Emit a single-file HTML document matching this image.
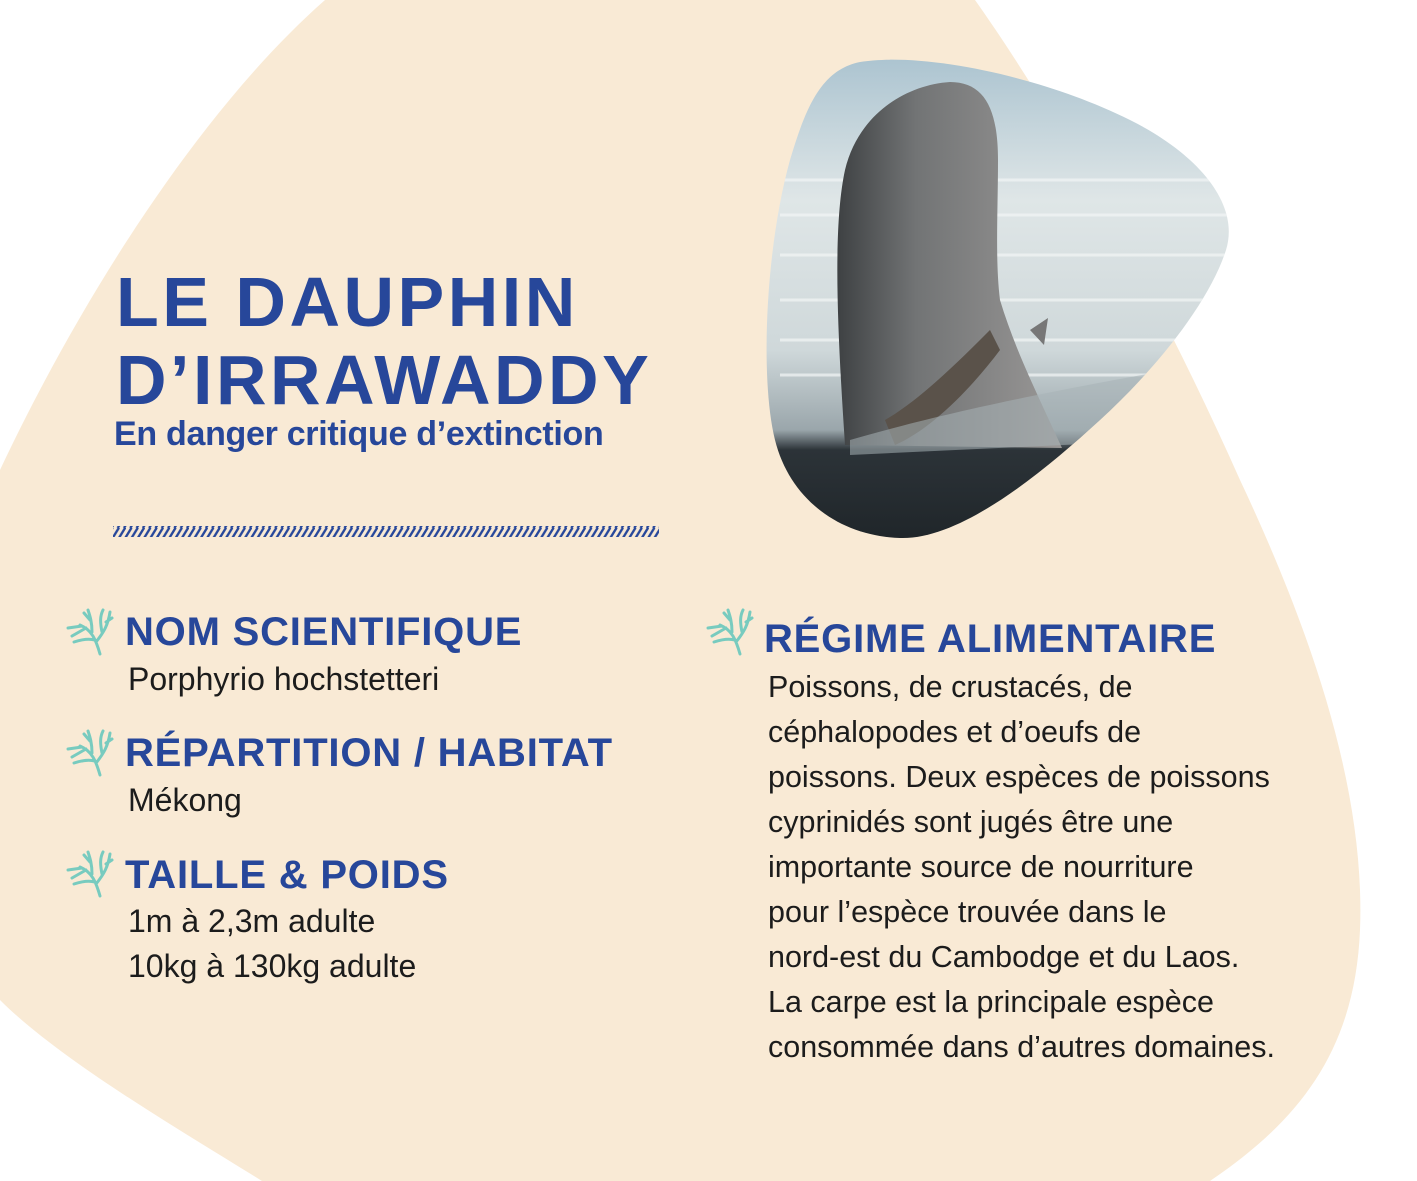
<!DOCTYPE html>
<html><head><meta charset="utf-8"><style>
html,body{margin:0;padding:0}
body{width:1417px;height:1181px;position:relative;overflow:hidden;background:#fff;font-family:"Liberation Sans",sans-serif}
.t{position:absolute;white-space:nowrap}
.h1{color:#27479a;font-weight:bold;font-size:70px;letter-spacing:3.5px;line-height:1}
.sub{color:#27479a;font-weight:bold;font-size:34px;letter-spacing:-0.3px}
.hd{color:#27479a;font-weight:bold;font-size:40px;letter-spacing:0.8px;line-height:1}
.b{color:#1c1c1c;font-size:32px;line-height:1}
.r{color:#1c1c1c;font-size:30.5px;line-height:1}
</style></head><body>
<svg width="1417" height="1181" style="position:absolute;left:0;top:0">
<defs>
<clipPath id="pc"><path d="M860,62 C920,52 1040,75 1130,120 C1200,155 1240,205 1226,250 C1210,300 1160,365 1100,420 C1040,475 960,540 900,538 C840,536 790,500 775,440 C760,380 765,250 790,160 C805,110 820,70 860,62Z"/></clipPath>
<linearGradient id="wat" x1="0" y1="0" x2="0" y2="1">
<stop offset="0" stop-color="#a9c2cf"/><stop offset="0.3" stop-color="#dfe6e7"/><stop offset="0.6" stop-color="#cfd8da"/><stop offset="0.76" stop-color="#9aa6ab"/><stop offset="0.8" stop-color="#2c3338"/><stop offset="1" stop-color="#1e2428"/></linearGradient>
<linearGradient id="dol" x1="0" y1="0" x2="1" y2="0"><stop offset="0" stop-color="#3e4143"/><stop offset="0.35" stop-color="#727475"/><stop offset="1" stop-color="#9a9897"/></linearGradient>
<pattern id="st" width="6.3" height="12" patternUnits="userSpaceOnUse"><path d="M-2,12 L6,-1 M4.3,12 L12.3,-1" stroke="#27479a" stroke-width="2.4"/></pattern>
</defs>
<path d="M325,0 L975,0 C1060,120 1160,300 1240,480 C1320,650 1365,800 1360,930 C1355,1050 1300,1120 1210,1181 L262,1181 C180,1130 60,1060 0,1000 L0,470 C80,300 200,110 325,0Z" fill="#f9ead5"/>
<g clip-path="url(#pc)">
<rect x="760" y="50" width="480" height="500" fill="url(#wat)"/>
<g stroke="#f3f6f6" stroke-width="3" opacity="0.7"><path d="M780,180 H1230 M780,215 H1230 M780,255 H1230 M780,300 H1230 M780,340 H1230 M780,375 H1230"/></g>
<path d="M845,445 C838,340 832,230 845,170 C858,115 905,85 950,82 C985,82 998,110 998,160 C998,210 995,260 1000,300 C1015,350 1040,400 1062,448 Z" fill="url(#dol)"/>
<path d="M1030,330 L1048,318 L1044,345Z" fill="#777"/>
<path d="M885,420 C920,400 960,360 990,330 L1000,350 C970,390 930,430 895,445Z" fill="#5a524a"/>
<path d="M850,440 C920,420 1000,400 1170,370 L1170,440 L850,455Z" fill="#a8b2b6" opacity="0.55"/>
</g>
<rect x="113" y="526" width="546" height="11" fill="url(#st)"/>
<g id="cor" stroke="#78cbbf" stroke-width="3" fill="none" stroke-linecap="round">
<path d="M100,654 C96,640 92,630 80,625 M96,642 C104,632 108,625 110,612 M92,632 C92,622 90,616 88,610 M102,632 C100,622 100,616 103,610 M82,626 L68,628 M86,628 L72,636 M106,622 L112,618 M95,640 C88,638 80,640 74,642 M90,620 L84,613"/>
</g>
<use href="#cor" x="0" y="121"/>
<use href="#cor" x="0" y="242"/>
<use href="#cor" x="640" y="0"/>
</svg>
<div class="t h1" style="left:116px;top:267px">LE DAUPHIN</div>
<div class="t h1" style="left:116px;top:345px">D’IRRAWADDY</div>
<div class="t sub" style="left:114px;top:415px">En danger critique d’extinction</div>

<div class="t hd" style="left:125px;top:612px">NOM SCIENTIFIQUE</div>
<div class="t b" style="left:128px;top:663px">Porphyrio hochstetteri</div>
<div class="t hd" style="left:125px;top:733px">RÉPARTITION / HABITAT</div>
<div class="t b" style="left:128px;top:784px">Mékong</div>
<div class="t hd" style="left:125px;top:855px">TAILLE &amp; POIDS</div>
<div class="t b" style="left:128px;top:905px">1m à 2,3m adulte</div>
<div class="t b" style="left:128px;top:950px">10kg à 130kg adulte</div>

<div class="t hd" style="left:764px;top:619px">RÉGIME ALIMENTAIRE</div>
<div class="t r" style="left:768px;top:672px">Poissons, de crustacés, de</div>
<div class="t r" style="left:768px;top:717px">céphalopodes et d’oeufs de</div>
<div class="t r" style="left:768px;top:762px">poissons. Deux espèces de poissons</div>
<div class="t r" style="left:768px;top:807px">cyprinidés sont jugés être une</div>
<div class="t r" style="left:768px;top:852px">importante source de nourriture</div>
<div class="t r" style="left:768px;top:897px">pour l’espèce trouvée dans le</div>
<div class="t r" style="left:768px;top:942px">nord-est du Cambodge et du Laos.</div>
<div class="t r" style="left:768px;top:987px">La carpe est la principale espèce</div>
<div class="t r" style="left:768px;top:1032px">consommée dans d’autres domaines.</div>
</body></html>
